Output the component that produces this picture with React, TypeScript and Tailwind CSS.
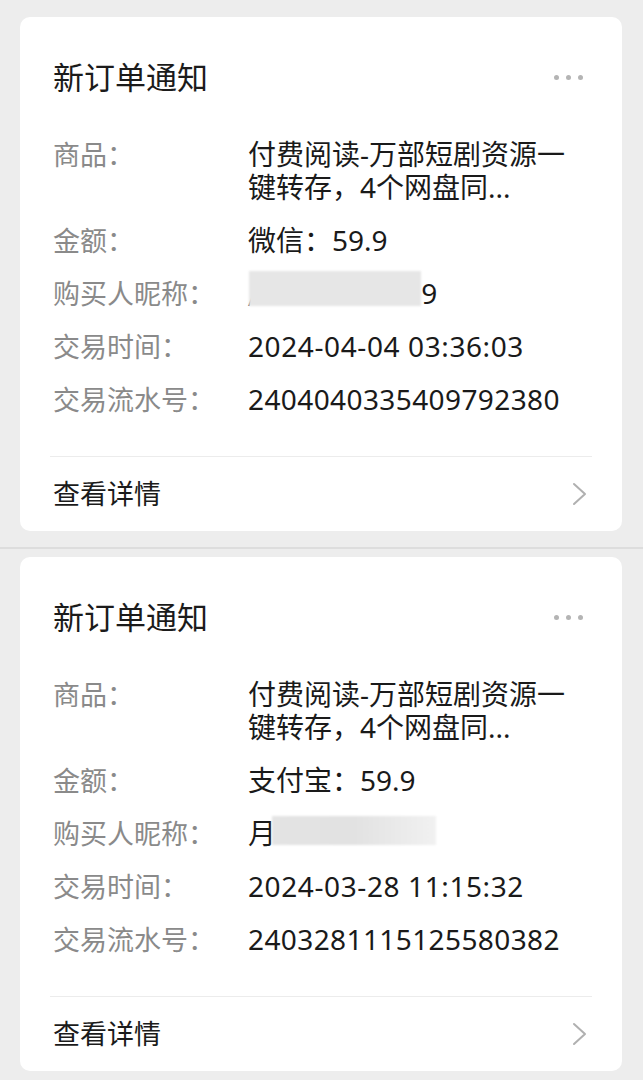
const FONT = "font-['Noto_Sans','Noto_Sans_CJK_SC',sans-serif]";

type Order = {
  channel: string;
  amount: string;
  buyer: "a" | "b";
  time: string;
  serial: string;
};

const orders: Order[] = [
  {
    channel: "微信",
    amount: "59.9",
    buyer: "a",
    time: "2024-04-04 03:36:03",
    serial: "2404040335409792380",
  },
  {
    channel: "支付宝",
    amount: "59.9",
    buyer: "b",
    time: "2024-03-28 11:15:32",
    serial: "2403281115125580382",
  },
];

const MoreDots = () => (
  <div className="mr-[3px] flex items-center gap-[7px]">
    <span className="size-[5px] rounded-full bg-[#b4b4b4]" />
    <span className="size-[5px] rounded-full bg-[#b4b4b4]" />
    <span className="size-[5px] rounded-full bg-[#b4b4b4]" />
  </div>
);

const Chevron = () => (
  <svg width="15" height="24" viewBox="0 0 15 24" fill="none">
    <polyline
      points="2,2 13,12 2,22"
      stroke="#b0b0b0"
      strokeWidth="2"
      strokeLinecap="round"
      strokeLinejoin="round"
    />
  </svg>
);

const Buyer = ({ kind }: { kind: "a" | "b" }) => {
  if (kind === "a") {
    return (
      <div className="flex items-center">
        <span className="mt-[14px] text-[14px] leading-none text-[#555]">/</span>
        <span className="-ml-[4px] -mt-[10px] h-[35px] w-[172px] bg-[#e6e6e6] blur-[1px]" />
        <span>9</span>
      </div>
    );
  }
  return (
    <div className="flex items-center">
      <span>月</span>
      <span className="-ml-[4px] -mt-[6px] h-[29px] w-[164px] bg-gradient-to-r from-[#e4e4e4] via-[#e2e2e2] to-[#f1f1f1] blur-[1px]" />
    </div>
  );
};

const Row = ({ label, children }: { label: string; children: React.ReactNode }) => (
  <div className="flex">
    <div className="w-[195px] shrink-0 text-[27px] text-[#8a8a8a]">{label}</div>
    <div className="w-[335px] text-[28px] text-[#1a1a1a]">{children}</div>
  </div>
);

const OrderCard = ({ order }: { order: Order }) => (
  <div className="mx-[20px] mr-[21px] rounded-[10px] bg-white">
    <div className="flex items-center justify-between pl-[33px] pr-[36px] pt-[40px]">
      <div className="text-[31px] leading-[40px] text-[#1b1b1b]">新订单通知</div>
      <MoreDots />
    </div>

    <div className="mt-[41px] flex flex-col gap-[20px] px-[33px] leading-[33px]">
      <Row label="商品：">
        <p>
          付费阅读-万部短剧资源一
          <br />
          键转存，4个网盘同...
        </p>
      </Row>
      <Row label="金额：">
        {order.channel}：{order.amount}
      </Row>
      <Row label="购买人昵称：">
        <Buyer kind={order.buyer} />
      </Row>
      <Row label="交易时间：">
        <span className="tracking-[0.6px]">{order.time}</span>
      </Row>
      <Row label="交易流水号：">
        <span className="tracking-[0.4px]">{order.serial}</span>
      </Row>
    </div>

    <div className="mx-[30px] mt-[40px] h-px bg-[#ececec]" />
    <div className="flex h-[74px] items-center justify-between pl-[33px] pr-[35px]">
      <span className="text-[27px] text-[#1b1b1b]">查看详情</span>
      <Chevron />
    </div>
  </div>
);

export default function App() {
  return (
    <div className={`${FONT} min-h-[1080px] bg-[#ededed] pt-[17px]`}>
      <OrderCard order={orders[0]} />
      <div className="h-[16px]" />
      <div className="h-[2px] bg-[#dddddd]" />
      <div className="h-[8px]" />
      <OrderCard order={orders[1]} />
    </div>
  );
}
